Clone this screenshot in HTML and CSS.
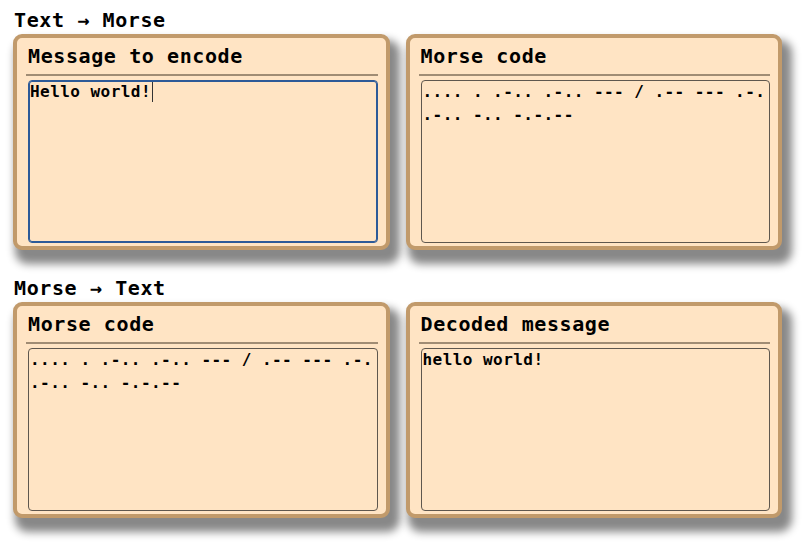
FILE: index.html
```html
<!DOCTYPE html>
<html>
<head>
<meta charset="utf-8">
<title>Morse</title>
<link rel="stylesheet" href="styles.css">
</head>
<body>
<div class="page">
  <section class="section">
    <h2 class="section-title">Text → Morse</h2>
    <div class="cards">
      <div class="card">
        <h3 class="card-title">Message to encode</h3>
        <hr class="rule">
        <div class="box focused">Hello world!<span class="caret"></span></div>
      </div>
      <div class="card">
        <h3 class="card-title">Morse code</h3>
        <hr class="rule">
        <div class="box">.... . .-.. .-.. --- / .-- --- .-. .-.. -.. -.-.--</div>
      </div>
    </div>
  </section>
  <section class="section">
    <h2 class="section-title">Morse → Text</h2>
    <div class="cards">
      <div class="card">
        <h3 class="card-title">Morse code</h3>
        <hr class="rule">
        <div class="box">.... . .-.. .-.. --- / .-- --- .-. .-.. -.. -.-.--</div>
      </div>
      <div class="card">
        <h3 class="card-title">Decoded message</h3>
        <hr class="rule">
        <div class="box">hello world!</div>
      </div>
    </div>
  </section>
</div>
</body>
</html>
```
FILE: styles.css
```css
html, body {
  margin: 0;
  padding: 0;
  background: #ffffff;
}
body {
  font-family: "DejaVu Sans Mono", "Liberation Mono", monospace;
  font-weight: bold;
  color: #000;
}
.page {
  width: 769px;
  padding: 9px 0 0 13px;
}
.section {
  margin-bottom: 27px;
}
.section-title {
  margin: 0 0 3px 1px;
  font-size: 20px;
  line-height: 22px;
  letter-spacing: 0.6px;
  font-weight: bold;
}
.cards {
  display: grid;
  grid-template-columns: 1fr 1fr;
  column-gap: 16px;
}
.card {
  box-sizing: border-box;
  background: #ffe4c4;
  border: 4px solid #c19a6b;
  border-radius: 9px;
  box-shadow: 6px 10px 8px 4px #888888;
  padding: 7px 8px 3px 9px;
  height: 216px;
  display: flex;
  flex-direction: column;
}
.card-title {
  margin: 0 0 0 2px;
  font-size: 20px;
  line-height: 22px;
  letter-spacing: 0.6px;
  font-weight: bold;
}
.rule {
  margin: 7px 0 4px 0;
  border: 0;
  height: 2px;
  flex: none;
  background: #a08c74;
}
.box {
  margin-left: 2px;
  flex: 1;
  box-sizing: border-box;
  border: 1px solid #5f574e;
  border-radius: 4px;
  padding: 0 1px;
  font-size: 16px;
  line-height: 22.5px;
  letter-spacing: 0.45px;
  word-wrap: break-word;
}
.box.focused {
  border-color: #2d5a98;
  box-shadow: inset 0 0 0 1px #2d5a98;
}
.caret {
  display: inline-block;
  width: 1px;
  height: 20px;
  margin-left: 1px;
  background: #333;
  vertical-align: -5px;
}
```
